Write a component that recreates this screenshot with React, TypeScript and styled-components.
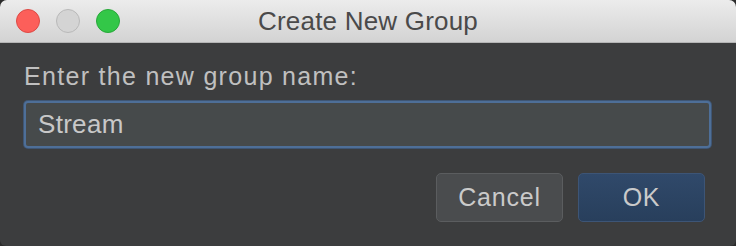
import React from 'react';
import styled, { createGlobalStyle } from 'styled-components';

const GlobalStyle = createGlobalStyle`
  html, body {
    margin: 0;
    padding: 0;
    background: #2b2b2b;
  }
`;

const Window = styled.div`
  width: 736px;
  height: 246px;
  display: flex;
  flex-direction: column;
  background: #3c3d3e;
  border-radius: 7px 7px 6px 6px;
  overflow: hidden;
  font-family: 'Liberation Sans', Arial, sans-serif;
`;

const TitleBar = styled.div`
  height: 43px;
  flex-shrink: 0;
  display: grid;
  grid-template-columns: 1fr auto 1fr;
  align-items: center;
  background: linear-gradient(#ececec, #d3d3d3);
  border-bottom: 1px solid #b5b5b5;
  box-sizing: border-box;
`;

const Lights = styled.div`
  display: flex;
  gap: 16px;
  padding-left: 16px;
`;

const Light = styled.span<{ $fill: string; $edge: string }>`
  width: 24px;
  height: 24px;
  border-radius: 50%;
  box-sizing: border-box;
  background: ${(p) => p.$fill};
  border: 1px solid ${(p) => p.$edge};
`;

const Title = styled.div`
  font-size: 26px;
  letter-spacing: 0.2px;
  color: #4a4a4a;
  padding-top: 1px;
`;

const Body = styled.div`
  flex: 1;
  display: flex;
  flex-direction: column;
  padding: 19px 25px 0 24px;
`;

const Label = styled.div`
  font-size: 25px;
  letter-spacing: 1.3px;
  color: #c0c0c0;
  line-height: 28px;
`;

const Input = styled.input`
  margin-top: 11px;
  height: 47px;
  box-sizing: border-box;
  border: 2px solid #4e6f98;
  border-radius: 4px;
  background: #464a4b;
  color: #c8c8c8;
  font-family: inherit;
  font-size: 26px;
  letter-spacing: 0.3px;
  padding: 0 0 0 12px;
  outline: none;
  box-shadow: 0 0 0 1px #3f5674;
`;

const ButtonRow = styled.div`
  display: flex;
  justify-content: flex-end;
  gap: 15px;
  margin-top: 25px;
  padding-right: 6px;
`;

const Button = styled.button<{ $primary?: boolean }>`
  width: 127px;
  height: 49px;
  border-radius: 5px;
  font-family: inherit;
  font-size: 25px;
  letter-spacing: 0.8px;
  color: #cacaca;
  cursor: pointer;
  background: ${(p) =>
    p.$primary ? 'linear-gradient(#30496a, #283f5c)' : '#4a4c4e'};
  border: 1px solid ${(p) => (p.$primary ? '#3d5576' : '#5b5d5f')};
`;

export default function App() {
  const [name, setName] = React.useState('Stream');

  return (
    <>
      <GlobalStyle />
      <Window>
        <TitleBar>
          <Lights>
            <Light $fill="#fc5f5a" $edge="#dd4a45" />
            <Light $fill="#d4d4d4" $edge="#b9b9b9" />
            <Light $fill="#33c748" $edge="#28a83a" />
          </Lights>
          <Title>Create New Group</Title>
          <div />
        </TitleBar>
        <Body>
          <Label>Enter the new group name:</Label>
          <Input value={name} onChange={(e) => setName(e.target.value)} />
          <ButtonRow>
            <Button>Cancel</Button>
            <Button $primary>OK</Button>
          </ButtonRow>
        </Body>
      </Window>
    </>
  );
}
